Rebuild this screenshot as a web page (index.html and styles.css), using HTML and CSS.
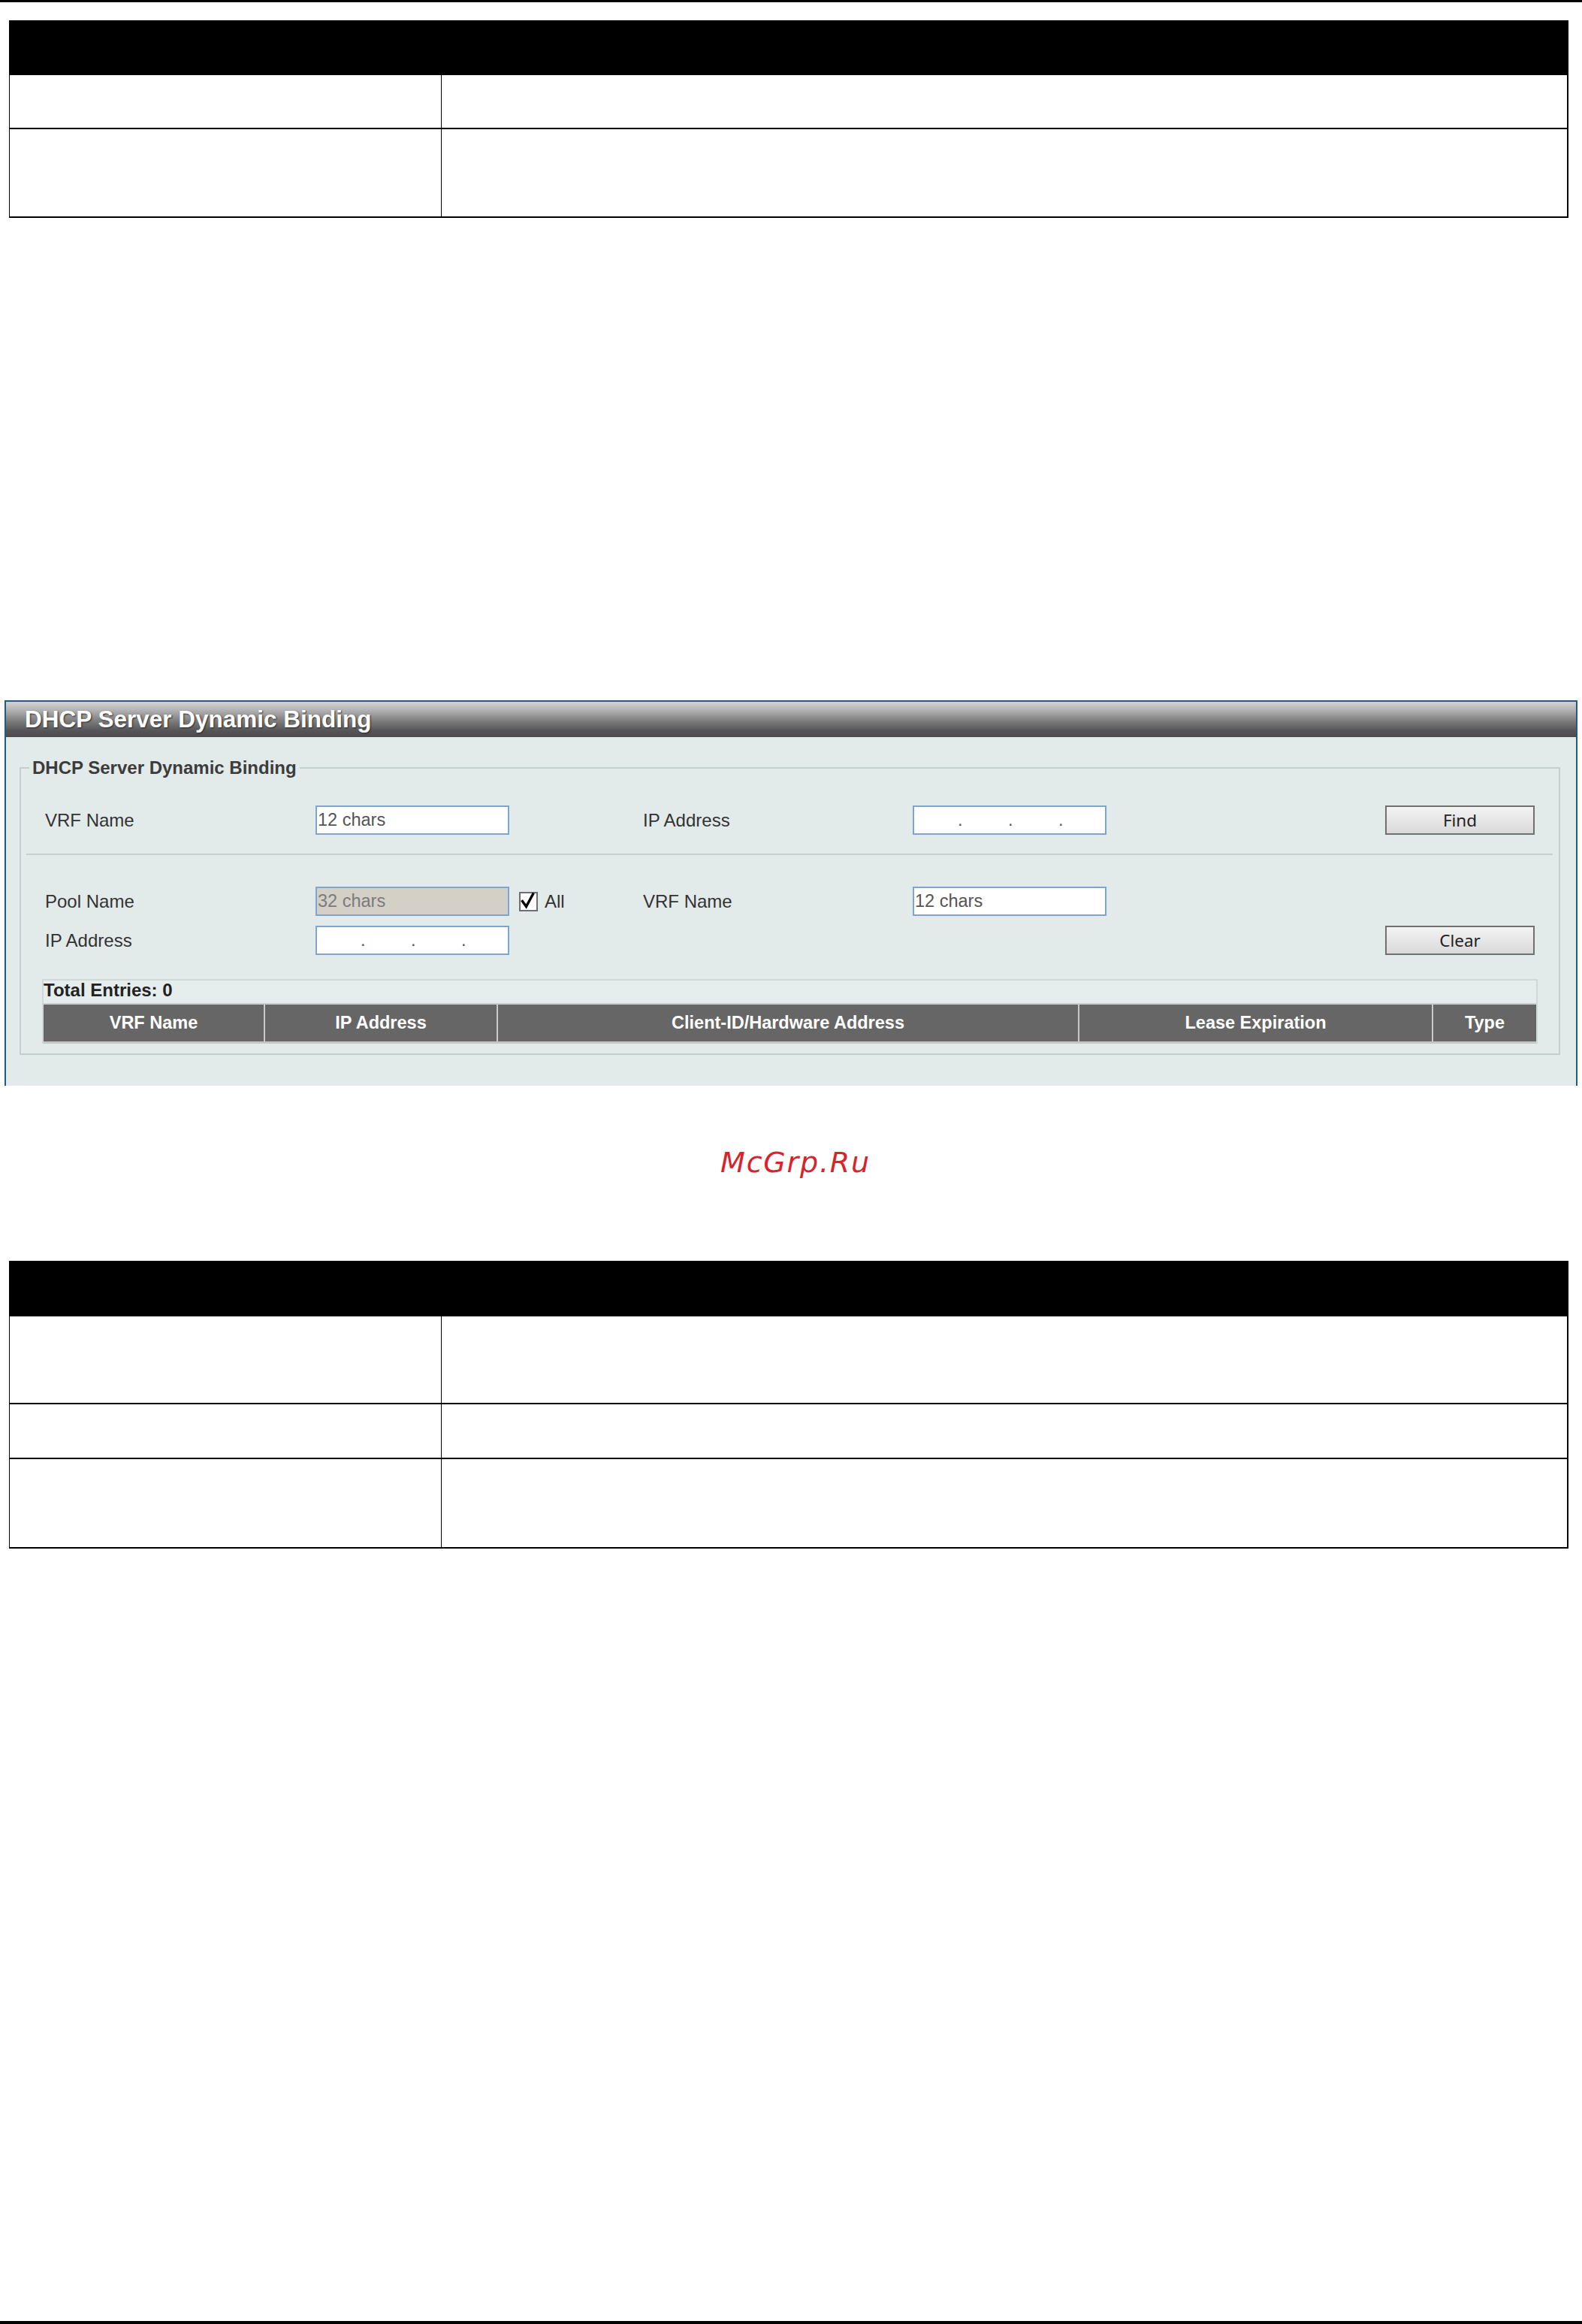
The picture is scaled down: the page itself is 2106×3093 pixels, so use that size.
FILE: index.html
```html
<!DOCTYPE html>
<html>
<head>
<meta charset="utf-8">
<title>DHCP Server Dynamic Binding</title>
<link rel="stylesheet" href="styles.css">
</head>
<body>
<div class="page">
  <div class="rule-top"></div>

  <div class="doc-table t1">
    <div class="doc-head h73"></div>
    <div class="doc-row h70"><div class="c1"></div><div class="c2"></div></div>
    <div class="doc-row h116"><div class="c1"></div><div class="c2"></div></div>
  </div>

  <div class="panel">
    <div class="panel-head">DHCP Server Dynamic Binding</div>
    <fieldset class="fs">
      <legend class="legend">DHCP Server Dynamic Binding</legend>
      <div class="row row1">
        <div class="lbl">VRF Name</div>
        <div class="cell"><input class="inp" type="text" value="12 chars"></div>
        <div class="lbl">IP Address</div>
        <div class="cell"><div class="inp ipbox"><span>.</span><span>.</span><span>.</span></div></div>
        <div class="cell"><button class="btn" type="button">Find</button></div>
      </div>
      <div class="sep"></div>
      <div class="row row2">
        <div class="lbl">Pool Name</div>
        <div class="cell">
          <input class="inp dis" type="text" value="32 chars" disabled>
          <span class="cb"><svg class="check" width="25" height="26" viewBox="0 0 25 26"><path d="M4.5 12.5 L9.5 19.5 L18.5 3" fill="none" stroke="#000" stroke-width="3.4" stroke-linecap="square" stroke-linejoin="miter"/></svg></span>
          <span class="lbl all">All</span>
        </div>
        <div class="lbl">VRF Name</div>
        <div class="cell"><input class="inp" type="text" value="12 chars"></div>
        <div class="cell"></div>
      </div>
      <div class="row row3">
        <div class="lbl">IP Address</div>
        <div class="cell"><div class="inp ipbox"><span>.</span><span>.</span><span>.</span></div></div>
        <div class="cell"></div>
        <div class="cell"></div>
        <div class="cell"><button class="btn" type="button">Clear</button></div>
      </div>
      <div class="entries">
        <div class="entries-title">Total Entries: 0</div>
        <div class="thead">
          <div>VRF Name</div>
          <div>IP Address</div>
          <div>Client-ID/Hardware Address</div>
          <div>Lease Expiration</div>
          <div>Type</div>
        </div>
      </div>
    </fieldset>
  </div>

  <div class="wm">McGrp.Ru</div>

  <div class="doc-table t2">
    <div class="doc-head h74"></div>
    <div class="doc-row h115"><div class="c1"></div><div class="c2"></div></div>
    <div class="doc-row h71"><div class="c1"></div><div class="c2"></div></div>
    <div class="doc-row h117"><div class="c1"></div><div class="c2"></div></div>
  </div>

  <div class="rule-bottom"></div>
</div>
</body>
</html>
```

FILE: styles.css
```css
html, body {
  margin: 0;
  padding: 0;
  background: #ffffff;
}

body {
  font-family: "Liberation Sans", Arial, sans-serif;
  color: #333333;
}

.page {
  height: 3093px;
  display: flex;
  flex-direction: column;
  align-items: flex-start;
  overflow: hidden;
}

.rule-top {
  flex: none;
  align-self: stretch;
  height: 3px;
  background: #000000;
}

.rule-bottom {
  flex: none;
  align-self: stretch;
  height: 4px;
  margin-top: auto;
  background: #000000;
}

/* document tables (black header) */
.doc-table {
  flex: none;
  margin-left: 12px;
  width: 2076px;
  box-sizing: border-box;
  border-left: 1px solid #000000;
  border-right: 2px solid #000000;
}

.t1 { margin-top: 24px; }
.t2 { margin-top: 109px; }

.doc-head { background: #000000; }
.h73 { height: 73px; }
.h74 { height: 74px; }

.doc-row {
  display: grid;
  grid-template-columns: 575px 1fr;
  border-bottom: 2px solid #000000;
}

.doc-row .c1 { border-right: 1px solid #000000; }

.h70 { height: 70px; }
.h71 { height: 71px; }
.h115 { height: 115px; }
.h116 { height: 116px; }
.h117 { height: 117px; }

/* application panel */
.panel {
  flex: none;
  margin-top: 642px;
  margin-left: 6px;
  width: 2094px;
  box-sizing: border-box;
  border: 2px solid #1f5b85;
  border-bottom: none;
  background: #e2eaea;
  padding-bottom: 41px;
}

.panel-head {
  height: 47px;
  display: flex;
  align-items: center;
  padding-left: 25px;
  background: linear-gradient(to bottom, #d2d2d2 0%, #b0b0b0 25%, #7c7c7c 55%, #555557 82%, #4b4b4d 100%);
  color: #ffffff;
  font-weight: bold;
  font-size: 31.5px;
  text-shadow: 1px 1px 2px #2a2a2a;
}

.fs {
  margin: 27px 21px 0 18px;
  padding: 0;
  border: 2px solid #c3cece;
  min-width: 0;
}

.legend {
  margin-left: 11px;
  padding: 0 4px;
  font-size: 24px;
  line-height: 27px;
  font-weight: bold;
  color: #3c3c3c;
}

.row {
  display: grid;
  grid-template-columns: 360px 436px 359px 629px 199px;
  align-items: center;
  height: 39px;
  padding: 0 32px;
}

.row1 { margin-top: 37px; }
.row2 { margin-top: 42px; }
.row3 { margin-top: 13px; }

.sep {
  margin: 25px 8px 0 7px;
  height: 2px;
  background: #c5cfcf;
}

.cell {
  display: flex;
  align-items: center;
}

.lbl {
  font-size: 24px;
  color: #333333;
}

.inp {
  width: 258px;
  height: 39px;
  box-sizing: border-box;
  margin: 0;
  border: 2px solid #7ea5cf;
  border-radius: 0;
  background: #ffffff;
  font-family: "Liberation Sans", Arial, sans-serif;
  font-size: 23.5px;
  color: #555555;
  padding: 0 0 0 1px;
  outline: none;
}

.inp.dis {
  background: #d4d0c8;
  color: #7b7b7b;
}

.ipbox {
  display: flex;
  align-items: center;
  padding-left: 58px;
}

.ipbox span {
  width: 67px;
  flex: none;
}

.cb {
  display: block;
  width: 25px;
  height: 26px;
  box-sizing: border-box;
  margin-left: 13px;
  border: 2px solid #6f6f6f;
  background: #ffffff;
  overflow: visible;
}

.check {
  display: block;
  margin: -2px 0 0 -2px;
  overflow: visible;
}

.all { margin-left: 9px; }

.btn {
  width: 199px;
  height: 39px;
  box-sizing: border-box;
  margin: 0;
  padding: 0;
  border: 2px solid #707070;
  border-radius: 0;
  background: linear-gradient(to bottom, #f4f4f4 0%, #e6e6e6 50%, #dadada 100%);
  font-family: "Noto Sans", "Open Sans", sans-serif;
  font-size: 22.5px;
  color: #222222;
}

.entries {
  margin: 32px 28px 13px 28px;
  border: 2px solid #cfd7d7;
  border-bottom: none;
  background: #e5eded;
}

.entries-title {
  font-size: 24px;
  line-height: 26px;
  padding-bottom: 4px;
  font-weight: bold;
  color: #222222;
}

.thead {
  display: grid;
  grid-template-columns: 293px 308px 772px 469px 1fr;
  column-gap: 2px;
  background: #c9c9c9;
  border-top: 2px solid #c9cfcf;
  border-bottom: 3px solid #c6c6c6;
}

.thead div {
  height: 49px;
  display: flex;
  align-items: center;
  justify-content: center;
  background: #666666;
  color: #ffffff;
  font-weight: bold;
  font-size: 23.5px;
}

/* watermark */
.wm {
  flex: none;
  align-self: stretch;
  margin-top: 80px;
  height: 44px;
  line-height: 44px;
  padding-left: 12px;
  text-align: center;
  font-family: "DejaVu Sans", sans-serif;
  font-style: italic;
  font-size: 38px;
  letter-spacing: 1.8px;
  color: #d8232a;
}
```
